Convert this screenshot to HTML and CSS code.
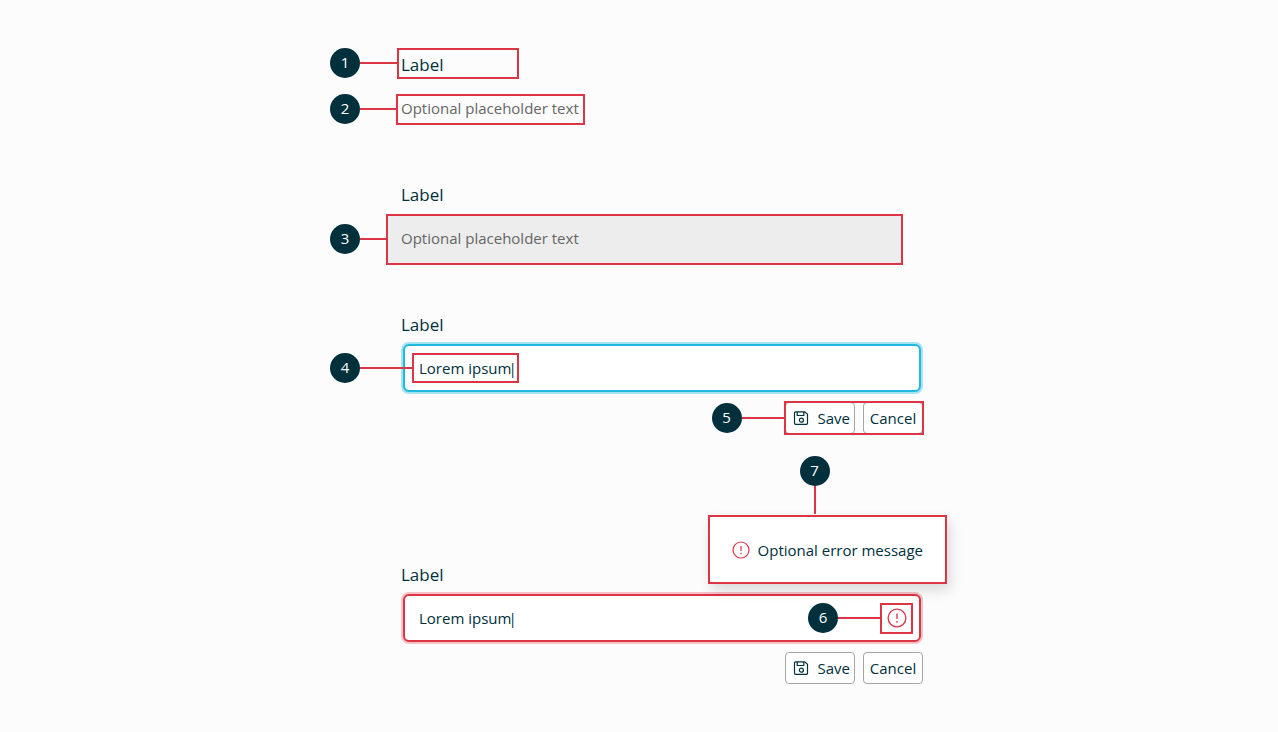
FILE: index.html
```
<!DOCTYPE html>
<html lang="en">
<head>
<meta charset="utf-8">
<title>Inline edit anatomy</title>
<link rel="stylesheet" href="styles.css">
</head>
<body>
<svg class="sprite" aria-hidden="true">
  <symbol id="save" viewBox="0 0 16 16">
    <path d="M2.8 1.8h9l2.7 2.5v8.8a1.3 1.3 0 0 1-1.3 1.3H2.8a1.3 1.3 0 0 1-1.3-1.3v-10a1.3 1.3 0 0 1 1.3-1.3zM4.2 1.8v3.7h6.6V1.8"/>
    <circle cx="8.4" cy="10.2" r="2"/>
  </symbol>
  <symbol id="alert" viewBox="0 0 18 18">
    <circle cx="9" cy="9" r="8"/>
    <path d="M9 5v5M9 11.8v1.4"/>
  </symbol>
</svg>
<main class="anatomy">
  <section class="group group-text">
    <div class="row">
      <label class="label mark mark-label" for="f1">Label<span class="callout callout-left">1</span></label>
    </div>
    <div class="row">
      <div class="mark mark-placeholder">
        <input class="plain-input" id="f1" type="text" placeholder="Optional placeholder text">
        <span class="callout callout-left">2</span>
      </div>
    </div>
  </section>

  <section class="group group-hover">
    <label class="label" for="f2">Label</label>
    <div class="mark mark-field">
      <input class="plain-input" id="f2" type="text" placeholder="Optional placeholder text">
      <span class="callout callout-left">3</span>
    </div>
  </section>

  <section class="group group-focus">
    <label class="label" for="f3">Label</label>
    <div class="field">
      <input class="field-input" id="f3" type="text" value="Lorem ipsum"><span class="caret">|</span>
      <div class="mark mark-value"><span class="callout callout-left callout-long">4</span></div>
    </div>
    <div class="actions">
      <button class="button" type="button"><svg class="icon"><use href="#save"/></svg>Save</button>
      <button class="button" type="button">Cancel</button>
      <div class="mark mark-actions"><span class="callout callout-left callout-medium">5</span></div>
    </div>
  </section>

  <section class="group group-error">
    <label class="label" for="f4">Label</label>
    <div class="field field-invalid">
      <input class="field-input" id="f4" type="text" value="Lorem ipsum" aria-describedby="message"><span class="caret">|</span>
      <div class="mark mark-icon">
        <svg class="icon icon-alert"><use href="#alert"/></svg>
        <span class="callout callout-left callout-medium">6</span>
      </div>
      <div class="mark message" id="message" role="alert">
        <svg class="icon icon-alert icon-message"><use href="#alert"/></svg>Optional error message
        <span class="callout callout-top">7</span>
      </div>
    </div>
    <div class="actions">
      <button class="button" type="button"><svg class="icon"><use href="#save"/></svg>Save</button>
      <button class="button" type="button">Cancel</button>
    </div>
  </section>
</main>
</body>
</html>
```
FILE: styles.css
```
:root {
  --ink: #00303c;
  --red: #dc3545;
  --muted: #666;
}

* {
  box-sizing: border-box;
}

body {
  margin: 0;
  background: #fcfcfc;
  color: var(--ink);
  font: 15px/20px "Open Sans", "Noto Sans", sans-serif;
}

.sprite {
  position: absolute;
  width: 0;
  height: 0;
}

.anatomy {
  max-width: 618px;
  margin: 0 auto;
  padding: 48px 26px 48px 71px;
}

.group-text {
  margin-bottom: 54px;
}

.group-hover {
  margin-bottom: 44px;
}

.group-focus {
  margin-bottom: 125px;
}

.row {
  display: flex;
}

.row + .row {
  margin-top: 15px;
}

.label {
  display: block;
  height: 31px;
  font-size: 17px;
  line-height: 31px;
}

/* Red outline around the part that a callout names */
.mark {
  position: relative;
  border: 2px solid var(--red);
}

.mark-label {
  width: 122px;
  margin-left: -4px;
  padding: 1px 0 0 2px;
  line-height: 27px;
}

.mark-placeholder {
  display: flex;
  width: 189px;
  height: 31px;
  margin-left: -5px;
  padding-left: 3px;
}

.mark-field {
  display: flex;
  height: 51px;
  margin: 4px 19px 0 -15px;
  padding-left: 13px;
  background: #ededed;
}

.plain-input,
.field-input {
  min-width: 0;
  padding: 0;
  border: 0;
  outline: 0;
  background: none;
  color: var(--ink);
  font: inherit;
}

.plain-input {
  width: 100%;
  padding-bottom: 3px;
}

.plain-input::placeholder {
  color: var(--muted);
  opacity: 1;
}

.field-input {
  field-sizing: content;
}

.caret {
  margin: 0 auto 0 -3px;
}

.field {
  position: relative;
  display: flex;
  height: 48px;
  margin: 4px 1px 0 2px;
  padding: 0 6px 0 14px;
  align-items: center;
  border: 2px solid #1fb9dd;
  border-radius: 6px;
  background: #fff;
  box-shadow: 0 0 0 2px #a5e3f3;
}

.field-invalid {
  border-color: var(--red);
  box-shadow: 0 0 0 2px #f5c2c7;
}

.mark-value {
  position: absolute;
  top: 7px;
  left: 7px;
  width: 107px;
  height: 30px;
}

.mark-icon {
  display: flex;
  flex: none;
  width: 33px;
  height: 31px;
  align-items: center;
  justify-content: center;
}

.actions {
  position: relative;
  display: flex;
  width: fit-content;
  margin: 10px -1px 0 auto;
  gap: 8px;
}

.button {
  display: flex;
  min-width: 60px;
  height: 32px;
  padding: 0 4px;
  align-items: center;
  justify-content: center;
  gap: 9px;
  border: 1px solid #a6a6a6;
  border-radius: 4px;
  background: #fff;
  color: var(--ink);
  font: inherit;
}

.mark-actions {
  position: absolute;
  inset: -1px;
}

.icon {
  width: 16px;
  height: 16px;
  margin-left: 3px;
  fill: none;
  stroke: currentColor;
  stroke-width: 1.2;
}

.icon-alert {
  flex: none;
  width: 20px;
  height: 20px;
  margin: 0;
  color: var(--red);
}

.icon-message {
  width: 18px;
  height: 18px;
}

.message {
  position: absolute;
  right: -28px;
  bottom: 56px;
  display: flex;
  height: 69px;
  padding: 0 22px;
  align-items: center;
  gap: 8px;
  background: #fff;
  box-shadow: 3px 6px 12px rgba(0, 0, 0, 0.14);
  white-space: nowrap;
}

/* Numbered disc, joined to its mark by a line */
.callout {
  --reach: 36px;
  position: absolute;
  width: 30px;
  height: 30px;
  border-radius: 50%;
  background: var(--ink);
  color: #fff;
  font-size: 15px;
  line-height: 29px;
  text-align: center;
}

.callout::after {
  content: "";
  position: absolute;
  background: var(--red);
}

.callout-left {
  top: calc(50% - 16px);
  right: calc(100% + var(--reach) + 2px);
}

.callout-left::after {
  top: 14px;
  left: 100%;
  width: var(--reach);
  height: 2px;
}

.mark-label .callout {
  --reach: 37px;
}

.mark-field .callout {
  --reach: 26px;
}

.callout-medium {
  --reach: 42px;
  top: calc(50% - 15px);
}

.callout-long {
  --reach: 52px;
  top: calc(50% - 15px);
}

.callout-top {
  --reach: 29px;
  left: 90px;
  bottom: calc(100% + var(--reach) + 2px);
}

.callout-top::after {
  top: 100%;
  left: 14px;
  width: 2px;
  height: calc(var(--reach) - 1px);
}
```
